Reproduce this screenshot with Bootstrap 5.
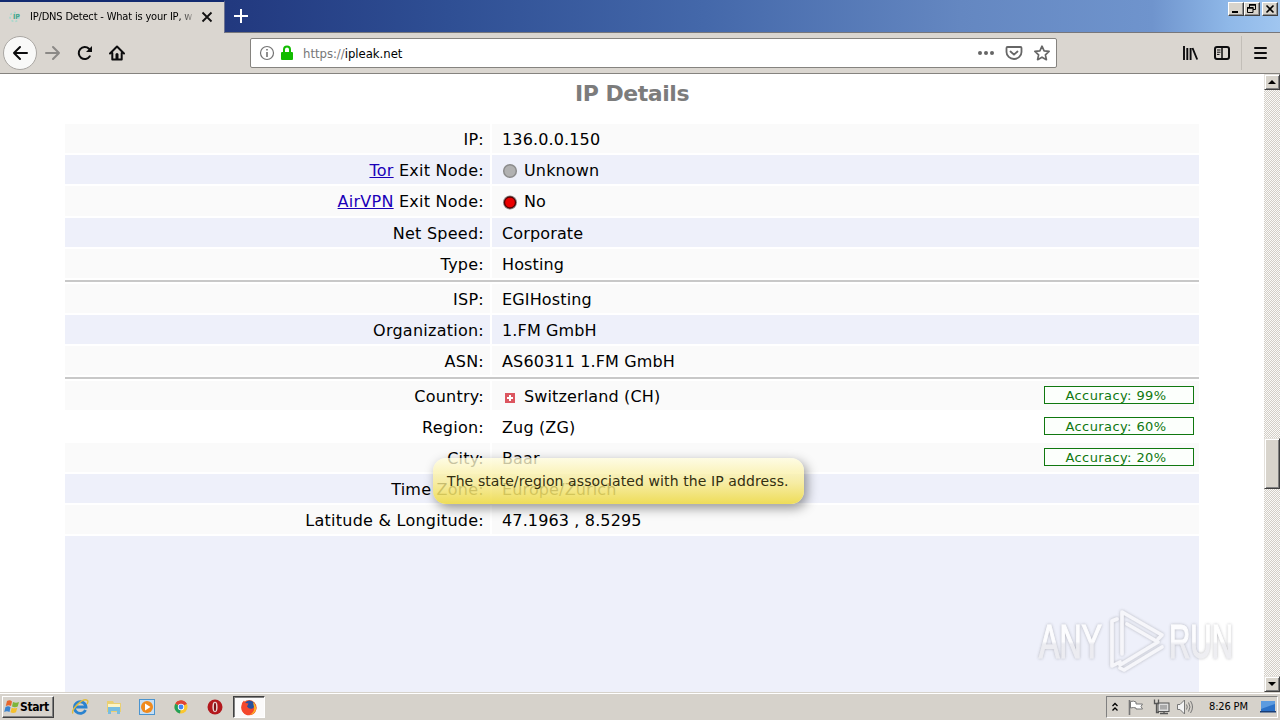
<!DOCTYPE html>
<html lang="en">
<head>
  <meta charset="UTF-8">
  <meta name="viewport" content="width=device-width, initial-scale=1">
  <title>IP/DNS Detect - What is your IP, what is your DNS</title>
  <link href="https://cdn.jsdelivr.net/npm/bootstrap@5.3.3/dist/css/bootstrap.min.css" rel="stylesheet">
  <style>
    body {
      width: 1280px;
      height: 720px;
      overflow: hidden;
      background: #fff;
      color: #000;
      font-family: "DejaVu Sans", Verdana, sans-serif;
      font-size: 16px;
      line-height: 1;
    }
    svg { display: block; flex: none; }

    /* browser chrome */
    .ui-font {
      font-family: "DejaVu Sans Condensed", "DejaVu Sans", Tahoma, sans-serif;
      font-stretch: condensed;
      font-size: 11px;
    }
    .title-bar {
      height: 33px;
      background: linear-gradient(90deg, #0a246a 0, #22397f 18%, #2f4f94 35%, #4468aa 55%, #6487c1 75%, #6f94cd 90%, #8fb8e8 96%, #a0c6f0 100%);
      border-bottom: 1px solid #77777b;
    }
    .browser-tab {
      width: 225px;
      height: 33px;
      background: #dad6d0;
      border-top: 2px solid #122a70;
      border-right: 1px solid #6c7290;
      padding: 0 11px 2px 9px;
    }
    .tab-title {
      width: 163px;
      margin-left: 7px;
      white-space: nowrap;
      overflow: hidden;
      line-height: 16px;
      letter-spacing: -.18px;
      -webkit-mask-image: linear-gradient(90deg, #000 150px, transparent 166px);
    }
    .win-buttons { padding: 2px 2px 0 0; }
    .win-close { margin-left: 2px; }
    .win-btn {
      width: 16px;
      height: 14px;
      background: #d8d4cc;
      border: 1px solid;
      border-color: #fff #404040 #404040 #fff;
      box-shadow: inset -1px -1px #909090;
    }
    .nav-bar {
      height: 41px;
      background: #dad6d0;
      border-bottom: 1px solid #85837f;
      padding-left: 3px;
    }
    .back-btn {
      width: 34px;
      height: 34px;
      border: 1px solid #aaa7a3;
      border-radius: 50%;
      background: #f9f9f8;
    }
    .forward-icon { margin-left: 8px; }
    .url-box {
      width: 807px;
      height: 30px;
      margin-left: 125px;
      border: 1px solid #85837f;
      border-radius: 2px;
      background: #fff;
      padding: 0 6px 0 8px;
    }
    .url-text { font-size: 13px; color: #777; margin-left: 8px; letter-spacing: -.03px; }
    .url-text b { font-weight: 400; color: #000; }
    .pocket-icon { margin-left: 10px; }
    .star-icon { margin-left: 11px; }
    .sidebar-icon { margin-left: 15px; }
    .menu-sep { width: 1px; height: 34px; background: #c2beb8; margin: 0 12px 0 11px; }
    .menu-icon { margin-right: 13px; }

    /* page */
    .page-view { height: 618px; }
    .page-area { width: 1264px; padding: 0 65px; background: #fff; }
    .page-title {
      height: 50px;
      margin: 0;
      padding-top: 7px;
      color: #7c7c7c;
      font-size: 22px;
      font-weight: 700;
      letter-spacing: -.45px;
      text-align: center;
    }
    .details { gap: 2px; }
    .detail-row { gap: 2px; height: 29px; }
    .detail-row > div { background: #fafafa; line-height: 31px; white-space: nowrap; }
    .detail-row.alt > div { background: #eef0fa; }
    .detail-row.hovered > div { background: #fff; }
    .detail-row.tall { height: 30px; }
    .detail-name { width: 425px; padding-right: 6px; text-align: right; letter-spacing: .25px; }
    .detail-value { width: 707px; padding: 0 5px 0 10px; letter-spacing: .14px; }
    .detail-name a { color: #1a00b8; }
    .group-line { height: 2px; background: #c8c8c8; }
    .map-box { background: #eef0fa; }
    .node-dot { width: 16px; height: 16px; margin-right: 6px; margin-top: 7px; }
    .accuracy {
      width: 150px;
      height: 18px;
      margin-top: 5px;
      border: 1px solid #107810;
      color: #107810;
      background: #fcfffc;
      font-size: 13px;
      letter-spacing: .4px;
      line-height: 17px;
      text-align: center;
      padding-right: 6px;
    }
    .hint {
      position: absolute;
      left: 433px;
      top: 458px;
      width: 371px;
      height: 46px;
      border-radius: 13px;
      background: linear-gradient(rgba(255, 252, 222, .78), rgba(248, 235, 140, .8) 55%, rgba(238, 219, 76, .93));
      box-shadow: 3px 4px 12px rgba(0, 0, 0, .42);
      color: #332f10;
      font-size: 14px;
      letter-spacing: .1px;
      line-height: 46px;
      padding-left: 14px;
      white-space: nowrap;
    }

    .scroll-track {
      width: 16px;
      background: repeating-conic-gradient(#d2cec7 0 25%, #fbfaf8 0 50%) 0 0 / 2px 2px;
    }
    .scroll-btn, .scroll-thumb {
      width: 16px;
      height: 16px;
      background: #d8d4cc;
      border: 1px solid;
      border-color: #e4e1dc #404040 #404040 #e4e1dc;
      box-shadow: inset 1px 1px #fff, inset -1px -1px #808080;
    }
    .scroll-thumb { height: 51px; margin-top: 348px; }

    /* taskbar */
    .task-bar {
      height: 28px;
      background: #d6d2cb;
      border-top: 1px solid #d6d2cb;
      box-shadow: inset 0 1px #fff;
      padding: 2px 2px 2px;
    }
    .start-btn {
      width: 52px;
      height: 22px;
      border: 1px solid;
      border-color: #fff #404040 #404040 #fff;
      box-shadow: inset -1px -1px #808080;
      font-weight: 700;
      font-size: 12px;
      letter-spacing: -.4px;
      padding-left: 1px;
    }
    .task-icons { margin-left: 17px; gap: 15.7px; }
    .task-active {
      width: 32px;
      height: 22px;
      margin-left: 9px;
      background: #fbfafa;
      border: 1px solid;
      border-color: #404040 #fff #fff #404040;
      box-shadow: inset 1px 1px #808080;
    }
    .tray {
      height: 22px;
      width: 172px;
      border: 1px solid;
      border-color: #808080 #fff #fff #808080;
      padding-left: 4px;
    }
    .flag-icon { margin-left: 8px; }
    .sound-icon { margin-left: 5px; }
    .clock { letter-spacing: -.15px; margin-left: 15px; width: 42px; white-space: nowrap; }
    .desktop-icon { margin-left: 9px; }
    .watermark { position: absolute; left: 1030px; top: 600px; }
  </style>
</head>
<body class="d-flex flex-column position-relative">

  <header>
    <div class="title-bar d-flex align-items-start">
      <div class="browser-tab d-flex align-items-center ui-font">
        <svg width="14" height="14" viewBox="0 0 14 14">
          <circle cx="5.500" cy="7" r="4.500" fill="none" stroke="#a5d8cc" stroke-width="1.500" stroke-dasharray="2 2"/>
          <text x="4" y="9" font-size="7" font-weight="700" fill="#3fa58c">IP</text>
        </svg>
        <div class="tab-title">IP/DNS Detect - What is your IP, w</div>
        <svg class="ms-auto" width="12" height="12" viewBox="0 0 12 12"><path d="M1.500 1.500l9 9m0-9l-9 9" stroke="#111" stroke-width="1.800"/></svg>
      </div>
      <svg class="ms-2 mt-2" width="16" height="16" viewBox="0 0 16 16"><path d="M8 1v14M1 8h14" stroke="#fff" stroke-width="2"/></svg>
      <div class="win-buttons d-flex ms-auto">
        <div class="win-btn"><svg width="14" height="12"><path d="M3 9h6" stroke="#000" stroke-width="2"/></svg></div>
        <div class="win-btn"><svg width="14" height="12"><path d="M4.500 4V1.500h6v5H8M2.500 4.500h5.500v5H2.500z" fill="none" stroke="#000"/><path d="M4 2h7M2 5h6.500" stroke="#000" stroke-width="1.500"/></svg></div>
        <div class="win-btn win-close"><svg width="14" height="12"><path d="M3.500 2.500l7 7m0-7l-7 7" stroke="#000" stroke-width="1.600"/></svg></div>
      </div>
    </div>

    <nav class="nav-bar d-flex align-items-center" aria-label="Browser toolbar">
      <div class="back-btn d-flex align-items-center justify-content-center">
        <svg width="16" height="16" viewBox="0 0 16 16"><path d="M15 8H2M8 2L2 8l6 6" fill="none" stroke="#0c0c0d" stroke-width="2" stroke-linecap="round" stroke-linejoin="round"/></svg>
      </div>
      <svg class="forward-icon" width="16" height="16" viewBox="0 0 16 16"><path d="M1 8h13M8 2l6 6-6 6" fill="none" stroke="#8b8986" stroke-width="2" stroke-linecap="round" stroke-linejoin="round"/></svg>
      <svg class="ms-3" width="16" height="16" viewBox="0 0 16 16"><path d="M12.800 11.300A6 6 0 1 1 12 3.800L14 6" fill="none" stroke="#0c0c0d" stroke-width="2" stroke-linecap="round"/><path d="M15 1v6H9z" fill="#0c0c0d"/></svg>
      <svg class="ms-3" width="16" height="16" viewBox="0 0 16 16"><path d="M1 8.500L8 1.500l7 7M3.300 8v6.500h9.400V8" fill="none" stroke="#0c0c0d" stroke-width="2" stroke-linecap="round" stroke-linejoin="round"/><path d="M6.500 15V9.500q0-1.500 1.500-1.500t1.500 1.500V15z" fill="#0c0c0d"/></svg>

      <div class="url-box d-flex align-items-center ui-font">
        <svg width="16" height="16" viewBox="0 0 16 16"><circle cx="8" cy="8" r="6.500" fill="none" stroke="#737373" stroke-width="1.200"/><path d="M8 7v5M8 4v1.600" stroke="#737373" stroke-width="1.600"/></svg>
        <svg class="ms-1" width="16" height="16" viewBox="0 0 16 16"><path d="M5 8V4.500a3 3 0 0 1 6 0V8" fill="none" stroke="#12bc00" stroke-width="2"/><rect x="2" y="7" width="12" height="8" rx="1" fill="#12bc00"/></svg>
        <div class="url-text">https://<b>ipleak.net</b></div>
        <svg class="ms-auto" width="18" height="16" viewBox="0 0 18 16" fill="#666"><circle cx="3" cy="8" r="2"/><circle cx="9" cy="8" r="2"/><circle cx="15" cy="8" r="2"/></svg>
        <svg class="pocket-icon" width="18" height="16" viewBox="0 0 18 16" fill="none" stroke="#666" stroke-linecap="round" stroke-linejoin="round"><path d="M2.500 2h13q1 0 1 1v4a7.500 7 0 0 1-15 0V3q0-1 1-1z" stroke-width="1.800"/><path d="M5.500 6.500L9 9.700l3.500-3.200" stroke-width="1.800"/></svg>
        <svg class="star-icon" width="16" height="16" viewBox="0 0 16 16"><path d="M8 1.200l2.100 4.600 5 .600-3.700 3.400 1 4.900L8 12.200l-4.400 2.500 1-4.900L.900 6.400l5-.600z" fill="none" stroke="#666" stroke-width="1.700" stroke-linejoin="round"/></svg>
      </div>

      <svg class="ms-auto" width="18" height="16" viewBox="0 0 18 16"><path d="M3 1v14M6.300 3v12M9.600 3v12M11.500 3l4.700 11.500" fill="none" stroke="#0c0c0d" stroke-width="1.900"/></svg>
      <svg class="sidebar-icon" width="16" height="16" viewBox="0 0 16 16"><rect x="1" y="2" width="14" height="12" rx="2" fill="none" stroke="#0c0c0d" stroke-width="2"/><path d="M8 2v12" stroke="#0c0c0d" stroke-width="1.500"/><path d="M3 5h3.500M3 7.200h3.500M3 9.400h2.500" stroke="#0c0c0d"/></svg>
      <div class="menu-sep"></div>
      <svg class="menu-icon" width="13" height="16" viewBox="0 0 13 16"><path d="M1 3h11M1 8h11M1 13h11" stroke="#0c0c0d" stroke-width="2" stroke-linecap="round"/></svg>
    </nav>
  </header>

  <div class="page-view d-flex">
    <main class="page-area d-flex flex-column">
      <h1 class="page-title">IP Details</h1>
      <div class="details d-flex flex-column flex-grow-1">
        <div class="detail-row d-flex"><div class="detail-name">IP:</div><div class="detail-value">136.0.0.150</div></div>
        <div class="detail-row alt d-flex"><div class="detail-name"><a href="#">Tor</a> Exit Node:</div>
          <div class="detail-value d-flex align-items-start">
            <svg class="node-dot mt-2" viewBox="0 0 16 16"><circle cx="8" cy="8" r="6.300" fill="#b1b1b1" stroke="#8c8c8c" stroke-width="1.500"/></svg>Unknown</div></div>
        <div class="detail-row tall d-flex"><div class="detail-name"><a href="#">AirVPN</a> Exit Node:</div>
          <div class="detail-value d-flex align-items-start">
            <svg class="node-dot mt-2" viewBox="0 0 16 16"><circle cx="8" cy="8.500" r="7" fill="#8a8a8a"/><circle cx="8" cy="8.500" r="5.500" fill="#ea0000" stroke="#500" stroke-width="1.300"/></svg>No</div></div>
        <div class="detail-row alt d-flex"><div class="detail-name">Net Speed:</div><div class="detail-value">Corporate</div></div>
        <div class="detail-row d-flex"><div class="detail-name">Type:</div><div class="detail-value">Hosting</div></div>
        <div class="group-line"></div>
        <div class="detail-row d-flex"><div class="detail-name">ISP:</div><div class="detail-value">EGIHosting</div></div>
        <div class="detail-row alt d-flex"><div class="detail-name">Organization:</div><div class="detail-value">1.FM GmbH</div></div>
        <div class="detail-row d-flex"><div class="detail-name">ASN:</div><div class="detail-value">AS60311 1.FM GmbH</div></div>
        <div class="group-line"></div>
        <div class="detail-row d-flex"><div class="detail-name">Country:</div>
          <div class="detail-value d-flex align-items-start">
            <svg class="node-dot mt-2" viewBox="0 0 16 16"><rect x="3" y="4" width="10" height="10" fill="#dc5660"/><path d="M8 6v6M5 9h6" stroke="#fff" stroke-width="2"/></svg>Switzerland (CH)
            <div class="accuracy ms-auto">Accuracy: 99%</div></div></div>
        <div class="detail-row hovered d-flex"><div class="detail-name">Region:</div>
          <div class="detail-value d-flex align-items-start">Zug (ZG)<div class="accuracy ms-auto">Accuracy: 60%</div></div></div>
        <div class="detail-row d-flex"><div class="detail-name">City:</div>
          <div class="detail-value d-flex align-items-start">Baar<div class="accuracy ms-auto">Accuracy: 20%</div></div></div>
        <div class="detail-row alt d-flex"><div class="detail-name">Time Zone:</div><div class="detail-value">Europe/Zurich</div></div>
        <div class="detail-row d-flex"><div class="detail-name">Latitude &amp; Longitude:</div><div class="detail-value">47.1963 , 8.5295</div></div>
        <div class="map-box flex-grow-1"></div>
      </div>
    </main>
    <div class="scroll-track d-flex flex-column">
      <div class="scroll-btn"><svg width="14" height="14"><path d="M3 9l4-4 4 4z"/></svg></div>
      <div class="scroll-thumb"></div>
      <div class="scroll-btn mt-auto"><svg width="14" height="14"><path d="M3 5l4 4 4-4z"/></svg></div>
    </div>
  </div>

  <footer class="task-bar d-flex align-items-center ui-font">
    <div class="start-btn d-flex align-items-center">
      <svg width="16" height="16" viewBox="0 0 16 16"><path d="M3 2q3-1.500 5 .500L7 7Q5 5.500 1.800 7z" fill="#e8662c"/><path d="M9 3q3 1.500 6 0l-1.300 4.500Q11 9 8 7.500z" fill="#7db53a"/><path d="M1.500 8q3-1.500 5 .300L5.500 13Q3 11.500.200 13z" fill="#3a83cf"/><path d="M7.700 8.700q3 1.300 5.600 0L12 13.300q-3 1.200-5.500 0z" fill="#f5c02c"/></svg>
      Start
    </div>
    <div class="task-icons d-flex align-items-center">
      <svg width="18" height="18" viewBox="0 0 18 18"><path d="M14.500 12A5.800 5.800 0 1 1 15 9H5" fill="none" stroke="#2a83cf" stroke-width="2.800"/><path d="M2 15.500C-.500 12 12-1 16.500 2.500q1 1.200-.500 3.500" fill="none" stroke="#e0bd3e" stroke-width="1.400"/></svg>
      <svg width="18" height="18" viewBox="0 0 18 18"><path d="M2 3h6l1 2h7v9H2z" fill="#e9cf72"/><path d="M3 6h12v3H3z" fill="#fdf4c4"/><path d="M3 16V9h12v7h-3v-3H6v3z" fill="#78bde0"/></svg>
      <svg width="18" height="18" viewBox="0 0 18 18"><rect x="1.500" y="1.500" width="15" height="15" fill="#c6dff5" stroke="#4b94cf"/><circle cx="9" cy="9" r="6" fill="#f08a1d"/><path d="M7 5.500l5.500 3.500L7 12.500z" fill="#fff"/></svg>
      <svg width="18" height="18" viewBox="0 0 18 18"><circle cx="9" cy="9" r="6.500" fill="#fbc72e"/><path d="M9 9L3.300 5.700A6.500 6.500 0 0 1 14.700 6z" fill="#df4437"/><path d="M9 9L3.300 5.700a6.500 6.500 0 0 0 4.700 9.700z" fill="#23a05a"/><path d="M8 6h6.800a6.500 6.500 0 0 0-11-1z" fill="#df4437"/><circle cx="9" cy="9" r="3.200" fill="#fff"/><circle cx="9" cy="9" r="2.400" fill="#4285f4"/></svg>
      <svg width="18" height="18" viewBox="0 0 18 18"><circle cx="9" cy="9" r="7.500" fill="#b3181d"/><ellipse cx="9" cy="9" rx="2.600" ry="5.200" fill="#e9d5d4"/><ellipse cx="9" cy="9" rx="1.100" ry="4.300" fill="#7d1115"/></svg>
    </div>
    <div class="task-active d-flex align-items-center justify-content-center">
      <svg width="18" height="18" viewBox="0 0 18 18"><circle cx="9" cy="9.500" r="7.500" fill="#f3602b"/><circle cx="9.500" cy="7.800" r="5.300" fill="#28509e"/><path d="M1.500 8Q1.500 4.500 4 2.500L5.500 5l3 .500-1.500 3q2 3 5.500 2Q15 9 14.500 5 17 8 16.300 11.500A7.500 7.500 0 0 1 1.500 8z" fill="#f4472c"/><path d="M13 4q4.500 4 2.500 9-2 3.500-6 4 5-3 4.700-7z" fill="#fcb526"/></svg>
    </div>

    <div class="tray d-flex align-items-center ms-auto">
      <svg width="8" height="12" viewBox="0 0 8 12"><path d="M1.500 5L4 2.500 6.500 5M1.500 9.500L4 7l2.500 2.500" fill="none" stroke="#000" stroke-width="1.300"/></svg>
      <svg class="flag-icon" width="18" height="18" viewBox="0 0 18 18"><path d="M2.500 2v15" stroke="#777" stroke-width="1.600"/><path d="M3.500 3.500q3-1 5.500.500v2h6.500l-1.500 2.500 1.500 2.500H9V10q-2.500-1-5.500 0z" fill="#fff" stroke="#777"/></svg>
      <svg class="ms-2" width="18" height="18" viewBox="0 0 18 18"><rect x="5" y="5" width="11" height="8.500" fill="#ddd" stroke="#555"/><rect x="7" y="7" width="7" height="4.500" fill="#aaa"/><path d="M7 15.500h8M11 14v2" stroke="#555" stroke-width="1.300"/><path d="M1.500 1.500v4h4v-4M3.500 5v9.500H6" fill="none" stroke="#555" stroke-width="1.300"/></svg>
      <svg class="sound-icon" width="18" height="18" viewBox="0 0 18 18" fill="none" stroke="#777"><path d="M1.500 6.500H4L8.500 2v14L4 11.500H1.500z" fill="#f4f4f4"/><path d="M10.500 6.500q1.500 2.500 0 5M12.500 4.500q3 4.500 0 9M14.500 3q4 6 0 12"/></svg>
      <div class="clock">8:26 PM</div>
      <svg class="desktop-icon" width="16" height="16" viewBox="0 0 16 16"><path d="M1 2h14v10H1z" fill="#2b71c7"/><path d="M1 2h14v3L1 10z" fill="#5b9be0"/><path d="M0 12h16v1.500H0z" fill="#193e77"/></svg>
    </div>
  </footer>

  <div class="hint" role="tooltip">The state/region associated with the IP address.</div>

  <svg class="watermark" width="215" height="82" viewBox="0 0 215 82">
    <defs>
      <linearGradient id="wm" x1="0" y1="0" x2="0" y2="1"><stop offset=".5" stop-color="#fff"/><stop offset=".55" stop-color="#ececf0"/></linearGradient>
      <filter id="soft" x="-10%" y="-10%" width="120%" height="120%"><feDropShadow dx="0" dy="0" stdDeviation="1.600" flood-color="#77777f" flood-opacity=".6"/></filter>
    </defs>
    <g filter="url(#soft)" opacity=".85">
      <g font-family="Liberation Sans Narrow, Liberation Sans, sans-serif" font-size="48" fill="url(#wm)" stroke="url(#wm)" stroke-width="1.200">
        <text x="9" y="58" textLength="63" lengthAdjust="spacingAndGlyphs">ANY</text>
        <text x="139" y="58" textLength="64" lengthAdjust="spacingAndGlyphs">RUN</text>
      </g>
      <g fill="none" stroke="#f8f8fb" stroke-width="3.600" stroke-linejoin="round" stroke-linecap="round">
        <path d="M92 54V12l40 23-4 4M97 24l31 18-38 23M87 19l-5 2v45l8-4M90 68l4 2 38-23"/>
      </g>
    </g>
  </svg>

</body>
</html>
